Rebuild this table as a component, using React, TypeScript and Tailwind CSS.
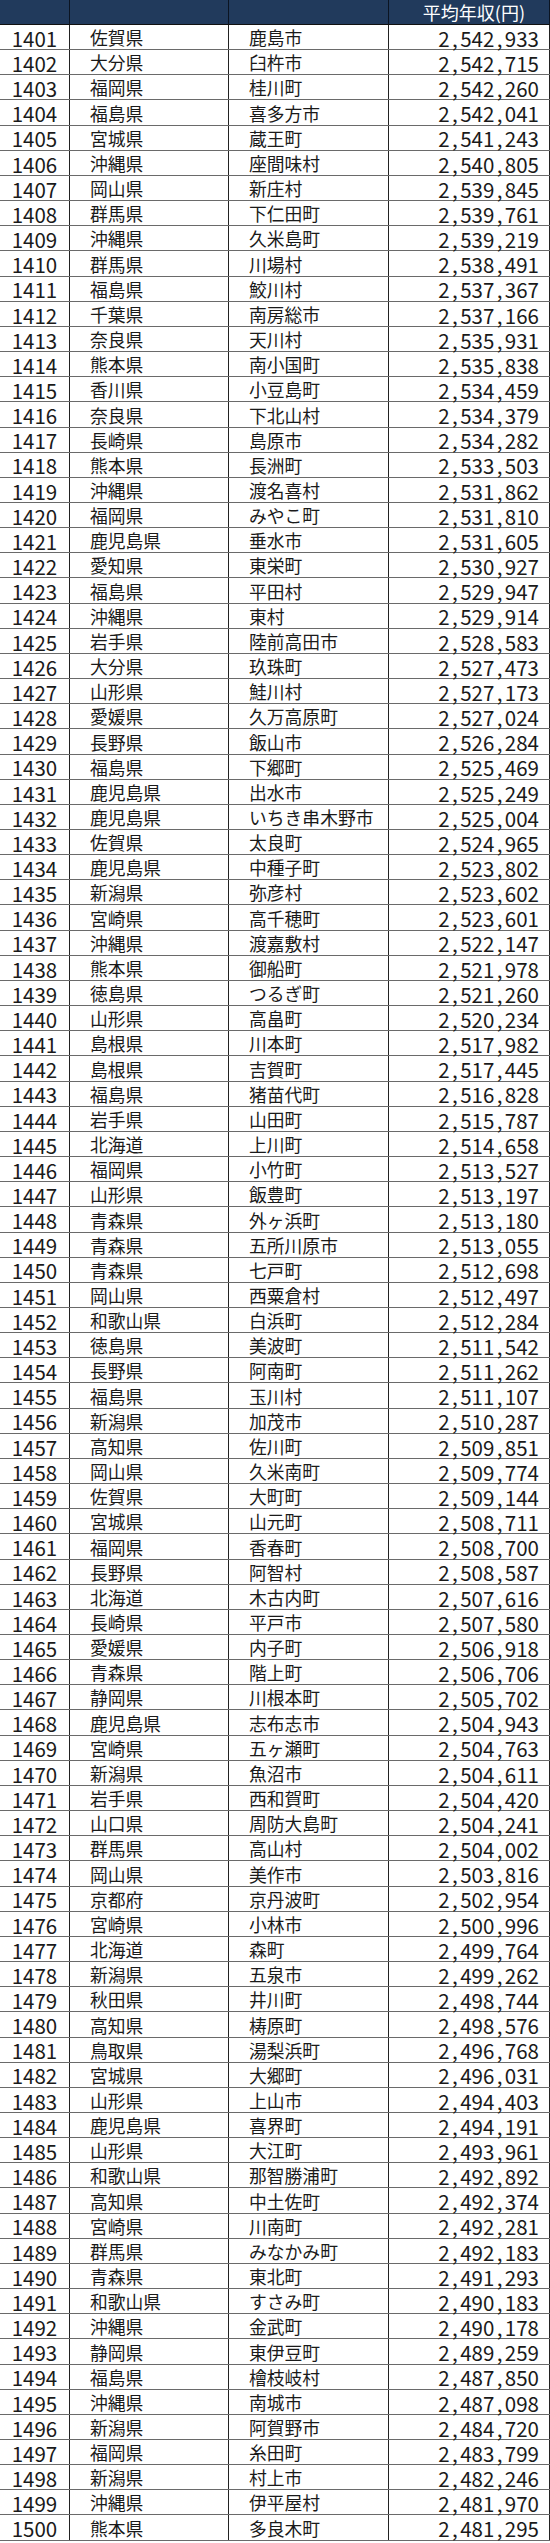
import React from "react";

const RAW = `1401 佐賀県 鹿島市 2,542,933
1402 大分県 臼杵市 2,542,715
1403 福岡県 桂川町 2,542,260
1404 福島県 喜多方市 2,542,041
1405 宮城県 蔵王町 2,541,243
1406 沖縄県 座間味村 2,540,805
1407 岡山県 新庄村 2,539,845
1408 群馬県 下仁田町 2,539,761
1409 沖縄県 久米島町 2,539,219
1410 群馬県 川場村 2,538,491
1411 福島県 鮫川村 2,537,367
1412 千葉県 南房総市 2,537,166
1413 奈良県 天川村 2,535,931
1414 熊本県 南小国町 2,535,838
1415 香川県 小豆島町 2,534,459
1416 奈良県 下北山村 2,534,379
1417 長崎県 島原市 2,534,282
1418 熊本県 長洲町 2,533,503
1419 沖縄県 渡名喜村 2,531,862
1420 福岡県 みやこ町 2,531,810
1421 鹿児島県 垂水市 2,531,605
1422 愛知県 東栄町 2,530,927
1423 福島県 平田村 2,529,947
1424 沖縄県 東村 2,529,914
1425 岩手県 陸前高田市 2,528,583
1426 大分県 玖珠町 2,527,473
1427 山形県 鮭川村 2,527,173
1428 愛媛県 久万高原町 2,527,024
1429 長野県 飯山市 2,526,284
1430 福島県 下郷町 2,525,469
1431 鹿児島県 出水市 2,525,249
1432 鹿児島県 いちき串木野市 2,525,004
1433 佐賀県 太良町 2,524,965
1434 鹿児島県 中種子町 2,523,802
1435 新潟県 弥彦村 2,523,602
1436 宮崎県 高千穂町 2,523,601
1437 沖縄県 渡嘉敷村 2,522,147
1438 熊本県 御船町 2,521,978
1439 徳島県 つるぎ町 2,521,260
1440 山形県 高畠町 2,520,234
1441 島根県 川本町 2,517,982
1442 島根県 吉賀町 2,517,445
1443 福島県 猪苗代町 2,516,828
1444 岩手県 山田町 2,515,787
1445 北海道 上川町 2,514,658
1446 福岡県 小竹町 2,513,527
1447 山形県 飯豊町 2,513,197
1448 青森県 外ヶ浜町 2,513,180
1449 青森県 五所川原市 2,513,055
1450 青森県 七戸町 2,512,698
1451 岡山県 西粟倉村 2,512,497
1452 和歌山県 白浜町 2,512,284
1453 徳島県 美波町 2,511,542
1454 長野県 阿南町 2,511,262
1455 福島県 玉川村 2,511,107
1456 新潟県 加茂市 2,510,287
1457 高知県 佐川町 2,509,851
1458 岡山県 久米南町 2,509,774
1459 佐賀県 大町町 2,509,144
1460 宮城県 山元町 2,508,711
1461 福岡県 香春町 2,508,700
1462 長野県 阿智村 2,508,587
1463 北海道 木古内町 2,507,616
1464 長崎県 平戸市 2,507,580
1465 愛媛県 内子町 2,506,918
1466 青森県 階上町 2,506,706
1467 静岡県 川根本町 2,505,702
1468 鹿児島県 志布志市 2,504,943
1469 宮崎県 五ヶ瀬町 2,504,763
1470 新潟県 魚沼市 2,504,611
1471 岩手県 西和賀町 2,504,420
1472 山口県 周防大島町 2,504,241
1473 群馬県 高山村 2,504,002
1474 岡山県 美作市 2,503,816
1475 京都府 京丹波町 2,502,954
1476 宮崎県 小林市 2,500,996
1477 北海道 森町 2,499,764
1478 新潟県 五泉市 2,499,262
1479 秋田県 井川町 2,498,744
1480 高知県 梼原町 2,498,576
1481 鳥取県 湯梨浜町 2,496,768
1482 宮城県 大郷町 2,496,031
1483 山形県 上山市 2,494,403
1484 鹿児島県 喜界町 2,494,191
1485 山形県 大江町 2,493,961
1486 和歌山県 那智勝浦町 2,492,892
1487 高知県 中土佐町 2,492,374
1488 宮崎県 川南町 2,492,281
1489 群馬県 みなかみ町 2,492,183
1490 青森県 東北町 2,491,293
1491 和歌山県 すさみ町 2,490,183
1492 沖縄県 金武町 2,490,178
1493 静岡県 東伊豆町 2,489,259
1494 福島県 檜枝岐村 2,487,850
1495 沖縄県 南城市 2,487,098
1496 新潟県 阿賀野市 2,484,720
1497 福岡県 糸田町 2,483,799
1498 新潟県 村上市 2,482,246
1499 沖縄県 伊平屋村 2,481,970
1500 熊本県 多良木町 2,481,295`;

const rows = RAW.split("\n").map((l) => l.trim().split(" "));

function Num({ v }: { v: string }) {
  const parts = v.split(",");
  return (
    <span className="inline-flex items-baseline">
      {parts.map((p, i) => (
        <React.Fragment key={i}>
          {i > 0 && <span className="inline-block w-[10.5px] text-center">,</span>}
          <span>{p}</span>
        </React.Fragment>
      ))}
    </span>
  );
}

export default function App() {
  return (
    <div
      className="w-[550px] bg-white text-[#1a1a1a]"
      style={{ fontFamily: '"Noto Sans CJK JP", "Noto Sans", sans-serif' }}
    >
      <div className="grid grid-cols-[70px_159px_160px_161px] h-[25px] bg-[#213a5c] text-white border-b border-[#111]">
        <div className="border-r-[1.5px] border-[#0b1422]" />
        <div className="border-r-[1.5px] border-[#0b1422]" />
        <div className="border-r-[1.5px] border-[#0b1422]" />
        <div className="border-r-[1.5px] border-[#0b1422] flex items-center justify-end pr-[24px] text-[18px] leading-none">
          平均年収(円)
        </div>
      </div>
      {rows.map((r) => (
        <div
          key={r[0]}
          className="grid grid-cols-[70px_159px_160px_161px] h-[25.165px] border-b-[1.5px] border-[#6a6a6a]"
        >
          <div className="border-r-[1.5px] border-[#222] flex items-center justify-center pt-[2px] text-[20.5px] leading-none">
            {r[0]}
          </div>
          <div className="border-r-[1.5px] border-[#222] flex items-center pl-[20px] pt-[2px] text-[17.8px] leading-none">
            {r[1]}
          </div>
          <div className="border-r-[1.5px] border-[#222] flex items-center pl-[20px] pt-[2px] text-[17.8px] leading-none">
            {r[2]}
          </div>
          <div className="border-r-[1.5px] border-[#222] flex items-center justify-end pr-[10px] pt-[2px] text-[20.5px] leading-none">
            <Num v={r[3]} />
          </div>
        </div>
      ))}
    </div>
  );
}
